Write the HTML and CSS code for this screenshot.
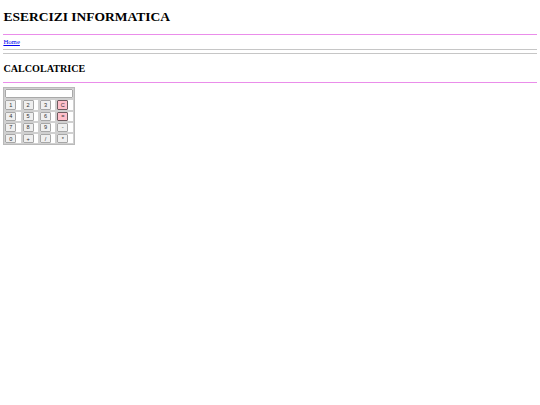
FILE: index.html
```html
<!DOCTYPE html>
<html lang="it">
<head>
<meta charset="utf-8">
<title>Esercizi Informatica - Calcolatrice</title>
<link rel="stylesheet" href="styles.css">
</head>
<body class="page">
<h1 class="title">ESERCIZI INFORMATICA</h1>
<hr class="rule rule-violet rule-top">
<a class="home" href="#">Home</a>
<hr class="rule rule-grey rule-grey-1">
<hr class="rule rule-grey rule-grey-2">
<h2 class="subtitle">CALCOLATRICE</h2>
<hr class="rule rule-violet rule-bottom">
<table class="calc">
  <tr>
    <td class="display-cell" colspan="4"><input class="display" type="text"></td>
  </tr>
  <tr>
    <td class="key"><button class="btn">1</button></td>
    <td class="key"><button class="btn">2</button></td>
    <td class="key"><button class="btn">3</button></td>
    <td class="key"><button class="btn btn-pink">C</button></td>
  </tr>
  <tr>
    <td class="key"><button class="btn">4</button></td>
    <td class="key"><button class="btn">5</button></td>
    <td class="key"><button class="btn">6</button></td>
    <td class="key"><button class="btn btn-pink">=</button></td>
  </tr>
  <tr>
    <td class="key"><button class="btn">7</button></td>
    <td class="key"><button class="btn">8</button></td>
    <td class="key"><button class="btn">9</button></td>
    <td class="key"><button class="btn">-</button></td>
  </tr>
  <tr>
    <td class="key"><button class="btn">0</button></td>
    <td class="key"><button class="btn">+</button></td>
    <td class="key"><button class="btn">/</button></td>
    <td class="key"><button class="btn">*</button></td>
  </tr>
</table>
</body>
</html>
```
FILE: styles.css
```css
html {
  background: #ffffff;
}

.page {
  display: flex;
  flex-direction: column;
  margin: 0;
  padding: 0 3.375px;
  font-family: "Liberation Serif", "Times New Roman", serif;
  font-size: 6.75px;
  line-height: 7.76px;
  color: #000000;
}

.title {
  font-size: 13.5px;
  line-height: 15.5px;
  font-weight: bold;
  margin: 8.8px 0 0;
}

.subtitle {
  font-size: 10.125px;
  line-height: 11.63px;
  font-weight: bold;
  margin: 9.2px 0 0;
}

.rule {
  flex: none;
  height: 0;
  margin: 0;
  border: 0;
  border-top: 1px solid #ea8dea;
}

.rule-top {
  margin-top: 9.3px;
}

.rule-bottom {
  margin-top: 7.5px;
}

.rule-grey {
  border-top-color: #c6c6c6;
}

.rule-grey-1 {
  margin-top: 2.64px;
}

.rule-grey-2 {
  margin-top: 3px;
}

.home {
  align-self: flex-start;
  margin-top: 3.7px;
  color: #0000ee;
  text-decoration: underline;
}

.calc {
  align-self: flex-start;
  margin-top: 4px;
  border-collapse: separate;
  border-spacing: 0.5px;
  border: 1px solid #b9b9b9;
}

.display-cell,
.key {
  padding: 0;
  border: 1px solid #d0d0d0;
  vertical-align: middle;
  text-align: left;
}

.key {
  width: 15.3px;
}

.display {
  display: block;
  box-sizing: border-box;
  width: 100%;
  height: 9.4px;
  margin: 0;
  padding: 0;
  border: 1px solid #a9a9a9;
  border-radius: 1px;
  background: #ffffff;
  font-size: 5.6px;
}

.btn {
  display: block;
  box-sizing: border-box;
  width: 11px;
  height: 9.2px;
  margin: 0;
  padding: 0;
  border: 1px solid #a7a7a7;
  border-radius: 1px;
  background: #efefef;
  color: #333333;
  font-family: "Liberation Sans", Arial, sans-serif;
  font-size: 5.6px;
  line-height: 6px;
  text-align: center;
}

.btn-pink {
  background: #ffc0cb;
  border-color: #6e5c60;
}
```
